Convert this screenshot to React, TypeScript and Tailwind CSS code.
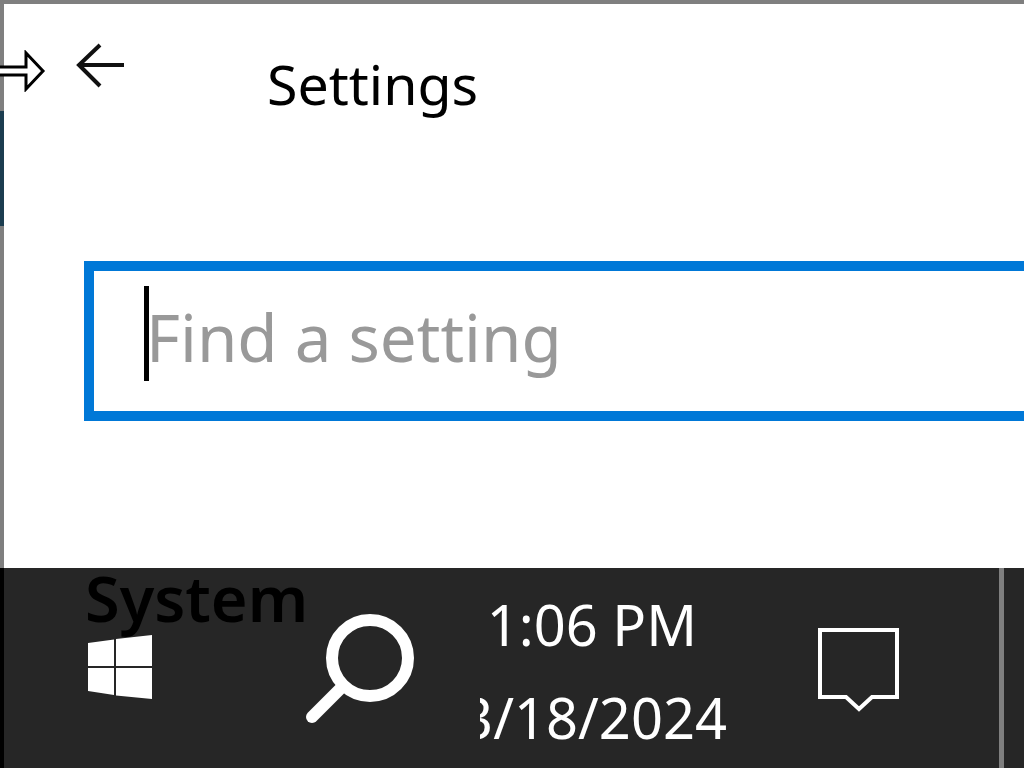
const sans = { fontFamily: '"Noto Sans", "Open Sans", sans-serif' };

function ForwardArrow() {
  return (
    <svg width="46" height="42" viewBox="0 0 46 42" className="shrink-0">
      <path d="M0 17H26V3L43 21L26 39V25H0" fill="#fff" stroke="#000" strokeWidth="3" />
    </svg>
  );
}

function BackArrow() {
  return (
    <svg width="50" height="46" viewBox="0 0 50 46" className="shrink-0">
      <path d="M48 22H4M24 2L3 22L24 43" fill="none" stroke="#111" strokeWidth="4" />
    </svg>
  );
}

function WinLogo() {
  return (
    <svg width="66" height="66" viewBox="0 0 66 66" className="shrink-0">
      <path d="M1 8L27 4.5V31H1Z M29 4L65 0V31H29Z M1 33H27V60L1 56Z M29 33H65V64L29 60.5Z" fill="#fff" />
    </svg>
  );
}

function SearchIcon() {
  return (
    <svg width="112" height="112" viewBox="0 0 112 112" className="shrink-0">
      <circle cx="65" cy="44" r="38" fill="none" stroke="#fff" strokeWidth="12" />
      <path d="M38 72L7 103" fill="none" stroke="#fff" strokeWidth="12" strokeLinecap="round" />
    </svg>
  );
}

function NotifyIcon() {
  return (
    <svg width="82" height="84" viewBox="0 0 82 84" className="shrink-0">
      <path d="M2 2H79V69H54L41 81L28 69H2Z" fill="none" stroke="#fff" strokeWidth="4" />
    </svg>
  );
}

export default function App() {
  return (
    <div className="w-[1024px] h-[768px] overflow-hidden bg-white flex flex-col" style={sans}>
      <div className="h-[568px] flex flex-col border-t-4 border-[#7f7f7f]">
        <div className="flex-1 flex min-h-0">
          <div className="w-[4px] flex flex-col shrink-0">
            <div className="h-[107px] bg-[#7f7f7f]" />
            <div className="h-[115px] bg-[#1c3d50]" />
            <div className="flex-1 bg-[#7f7f7f]" />
          </div>
          <div className="flex-1 min-w-0 relative">
            <div className="flex items-start">
              <div className="-ml-[4px] mt-[46px]"><ForwardArrow /></div>
              <div className="ml-[30px] mt-[39px]"><BackArrow /></div>
              <h1 className="ml-[141px] mt-[43px] text-[55.5px] leading-[74px] text-black font-normal">Settings</h1>
            </div>
            <div className="ml-[80px] mt-[140px] h-[160px] w-[1000px] border-[10px] border-[#0078d7] flex items-start pl-[50px]">
              <div className="w-[5px] h-[95px] mt-[15px] bg-black shrink-0" />
              <span className="-ml-[3px] mt-[33px] text-[65.5px] leading-none text-[#999999]">Find a setting</span>
            </div>
            <div className="absolute z-10 left-[81px] top-[562px] text-[63px] leading-none font-semibold text-black">System</div>
          </div>
        </div>
      </div>
      <div className="h-[200px] bg-[#262626] flex items-start border-l-4 border-black">
        <div className="ml-[83px] mt-[67px]"><WinLogo /></div>
        <div className="ml-[152px] mt-[46px]"><SearchIcon /></div>
        <div className="ml-[63px] w-[247px] h-full overflow-hidden flex flex-col items-end text-white text-[56px] leading-none">
          <div className="mt-[28px] mr-[30px]">1:06 PM</div>
          <div className="mt-[37px]">3/18/2024</div>
        </div>
        <div className="ml-[91px] mt-[60px]"><NotifyIcon /></div>
        <div className="ml-[99px] w-[5px] h-full bg-[#7f7f7f]" />
      </div>
    </div>
  );
}
